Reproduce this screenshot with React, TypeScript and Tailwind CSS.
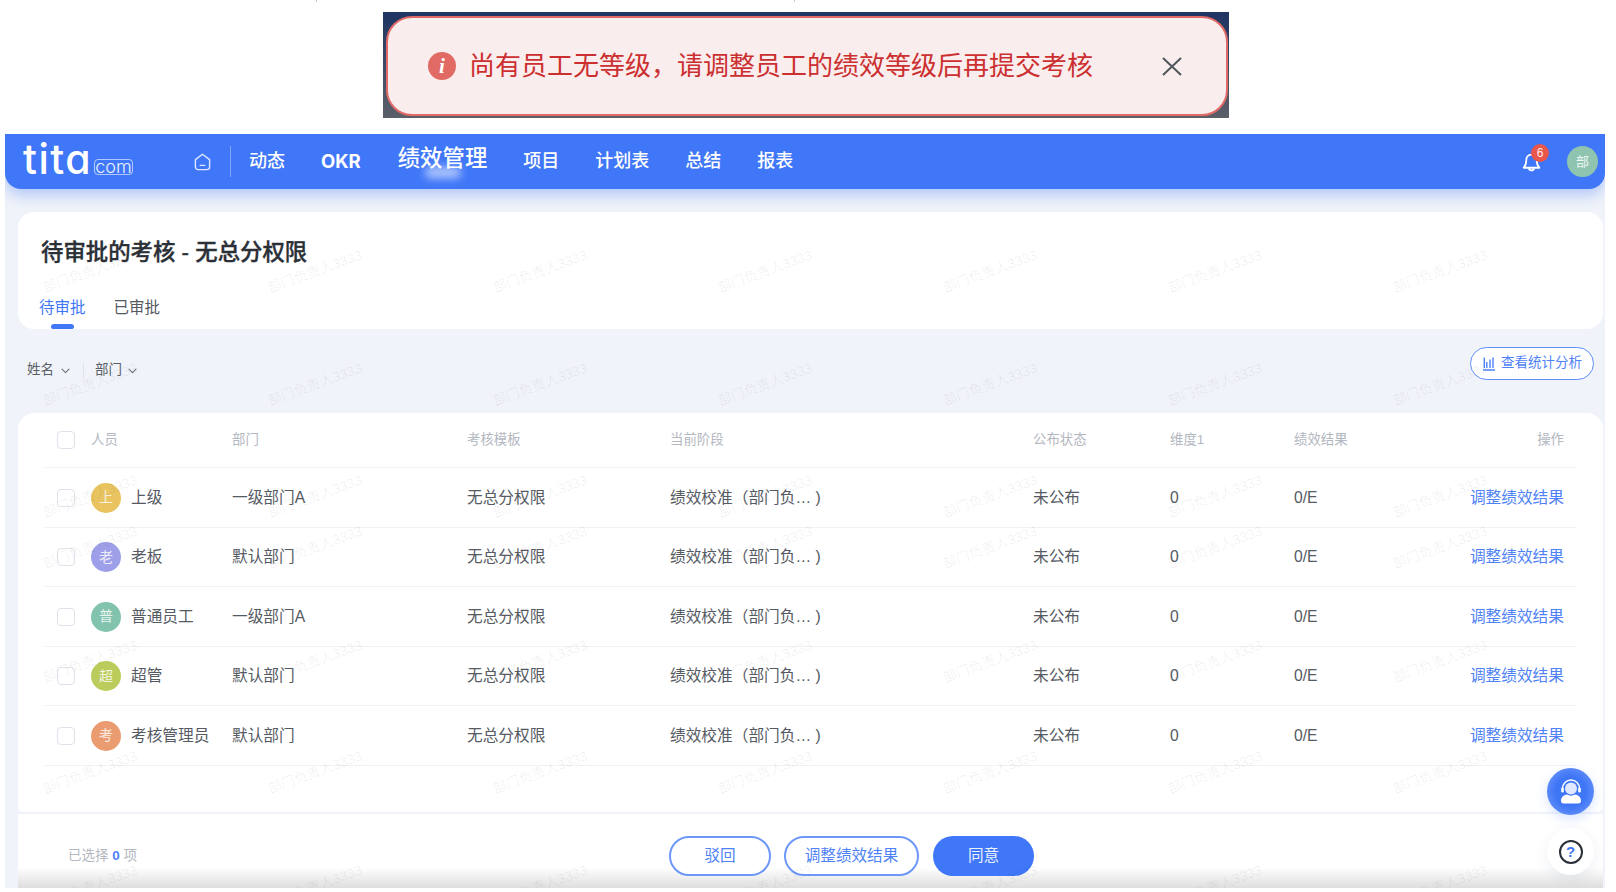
import React from "react";

const rows = [
  { c: "上", color: "bg-[#e8c35f]", name: "上级", dept: "一级部门A" },
  { c: "老", color: "bg-[#9d9fe8]", name: "老板", dept: "默认部门" },
  { c: "普", color: "bg-[#82c3ae]", name: "普通员工", dept: "一级部门A" },
  { c: "超", color: "bg-[#bccc5c]", name: "超管", dept: "默认部门" },
  { c: "考", color: "bg-[#ea9c70]", name: "考核管理员", dept: "默认部门" },
];

const wmY = [252, 365, 477, 528, 642, 753, 867];
const wmX = [43, 268, 493, 718, 943, 1168, 1393];

const cols = "grid grid-cols-[46px_141px_235px_203px_363px_137px_124px_126px_1fr] items-center";

function Chevron() {
  return (
    <svg width="9" height="6" viewBox="0 0 9 6" fill="none" className="text-[#6b7078]">
      <path d="M1 1.2 4.5 4.6 8 1.2" stroke="currentColor" strokeWidth="1.1" strokeLinecap="round" strokeLinejoin="round" />
    </svg>
  );
}

function Check() {
  return <span className="block w-[18px] h-[18px] rounded-[4px] border border-[#dfe2ea] bg-white/60" />;
}

export default function App() {
  return (
    <div className="relative w-[1616px] h-[892px] overflow-hidden bg-white font-['Liberation_Sans','Noto_Sans_CJK_SC',sans-serif]">
      <span className="absolute left-[316px] top-0 w-px h-[2px] bg-[#c8c8c8]" />
      <span className="absolute left-[794px] top-0 w-px h-[2px] bg-[#c8c8c8]" />

      {/* toast */}
      <div className="h-[134px] pt-[12px] pl-[383px]">
        <div className="w-[846px] h-[106px] pl-[3px] pr-px pt-[4px] pb-[2px] bg-linear-to-b from-[#1e3462] to-[#5c5f68]">
          <div className="h-full flex items-center rounded-[26px] border-2 border-[#e06a66] bg-[#f9eded]">
            <span className="ml-[40px] w-[28px] h-[28px] rounded-full bg-[#e16a64] flex items-center justify-center text-white text-[21px] italic font-bold font-['Liberation_Serif',serif] leading-none">
              i
            </span>
            <span className="ml-[13px] text-[26px] leading-none text-[#cc2f30] whitespace-nowrap">
              尚有员工无等级，请调整员工的绩效等级后再提交考核
            </span>
            <svg width="20" height="19" viewBox="0 0 20 19" className="ml-[69px]" fill="none">
              <path d="M1 1 19 18M19 1 1 18" stroke="#50555c" strokeWidth="2" />
            </svg>
          </div>
        </div>
      </div>

      {/* page */}
      <div className="relative ml-[5px] w-[1600px] h-[754px] overflow-hidden bg-[#f0f3f9]">
        {/* nav */}
        <header className="relative h-[55px] flex items-center bg-[#4077f8] rounded-b-[16px] text-white shadow-[0_5px_16px_rgba(64,119,248,0.4)]">
          <div className="ml-[18px] w-[109px] flex items-end h-[30px] mt-[-5px]">
            <span className="text-[41px] leading-[30px] font-medium tracking-[1.5px] font-['Inter',sans-serif] [font-feature-settings:'cv11'] whitespace-nowrap">
              tita
            </span>
            <span className="ml-[2px] mb-[-1px] w-[41px] h-[16px] flex items-center justify-center rounded-[4px] border border-white/60 text-[18px] leading-none text-white/90 font-['Inter',sans-serif] font-light">
              com
            </span>
          </div>
          <svg width="17" height="18" viewBox="0 0 17 18" fill="none" className="ml-[62px]">
            <path d="M8.5 1.2 15.6 6.6V14a2.6 2.6 0 0 1-2.6 2.6H4A2.6 2.6 0 0 1 1.4 14V6.6L8.5 1.2Z" stroke="#dfe8fe" strokeWidth="1.4" strokeLinejoin="round" />
            <path d="M6.2 12.4h4.6" stroke="#dfe8fe" strokeWidth="1.4" strokeLinecap="round" />
          </svg>
          <span className="ml-[19px] w-px h-[31px] bg-white/35" />
          <nav className="ml-[18px] -mt-[1px] flex items-center gap-[36px] text-[18px] font-medium leading-none whitespace-nowrap">
            <span>动态</span>
            <span className="font-['Inter',sans-serif] font-bold text-[18.5px]">OKR</span>
            <span className="relative ml-[1px] text-[22.4px] -mt-[3px]">
              绩效管理
              <span className="absolute left-[27px] top-[19px] w-[36px] h-[11px] rounded-full bg-white/60 blur-[4px]" />
            </span>
            <span>项目</span>
            <span>计划表</span>
            <span>总结</span>
            <span>报表</span>
          </nav>
          <div className="ml-auto mr-[7px] flex items-center">
            <div className="relative w-[19px] h-[19px] mt-[2px]">
              <svg width="19" height="20" viewBox="0 0 18 19" fill="none">
                <path d="M9 1.5C5.6 1.5 4 4.2 4 7.2c0 3.2-.6 5-2.400 6.800h14.800C14.600 12.200 14 10.400 14 7.200c0-3-1.600-5.700-5-5.700Z" stroke="#fff" strokeWidth="1.7" strokeLinejoin="round" />
                <path d="M6.600 14.600c0 2.600 4.800 2.600 4.800 0" stroke="#fff" strokeWidth="1.7" />
              </svg>
              <span className="absolute left-[9px] top-[-9px] w-[18px] h-[18px] rounded-full bg-[#e9574c] flex items-center justify-center text-[12px] leading-none text-white/90">
                6
              </span>
            </div>
            <span className="ml-[26px] w-[31px] h-[31px] rounded-full bg-[#8ec4b0] flex items-center justify-center text-[13px] text-white/85">
              部
            </span>
          </div>
        </header>

        {/* title card */}
        <section className="ml-[13px] mr-[2px] mt-[23px] h-[117px] rounded-[16px] bg-white relative">
          <h1 className="pl-[23px] pt-[27px] text-[22.4px] leading-[28px] font-medium [-webkit-text-stroke:0.35px_#2b2f36] text-[#2b2f36] whitespace-nowrap">
            待审批的考核 - 无总分权限
          </h1>
          <div className="pl-[21px] mt-[29px] flex gap-[28px] text-[15.5px] leading-[24px]">
            <span className="relative text-[#3f77f6]">
              待审批
              <span className="absolute left-[12px] top-[28px] w-[23px] h-[5px] rounded-t-[3px] rounded-b-[2px] bg-[#3f77f6]" />
            </span>
            <span className="text-[#555a62]">已审批</span>
          </div>
        </section>

        {/* filters */}
        <div className="ml-[22px] mr-[11px] h-[84px] flex items-center text-[13.5px] text-[#5a5f67]">
          <span className="-mt-[1px]">姓名</span>
          <span className="ml-[7px]"><Chevron /></span>
          <span className="ml-[13px] w-px h-[16px] bg-[#dfe2e9]" />
          <span className="ml-[11px] -mt-[1px]">部门</span>
          <span className="ml-[6px]"><Chevron /></span>
          <button className="ml-auto -mt-[15px] w-[124px] h-[33px] rounded-full border border-[#5e8ef8] bg-white flex items-center justify-center gap-[5px] text-[13.5px] text-[#4f82f6]">
            <svg width="14" height="15" viewBox="0 0 14 15" fill="none">
              <path d="M1 14h12M2.300 12V1.500M4.800 12V6M8 12V3.500M11 12V1.500" stroke="#4f82f6" strokeWidth="1.400" />
            </svg>
            查看统计分析
          </button>
        </div>

        {/* table */}
        <section className="ml-[13px] mr-[2px] h-[399px] rounded-t-[16px] rounded-b-[5px] bg-white px-[27px]">
          <div className={`${cols} h-[55px] border-b border-[#eff1f5] text-[13.4px] text-[#b3b7bf]`}>
            <span className="pl-[12px]"><Check /></span>
            <span>人员</span>
            <span>部门</span>
            <span>考核模板</span>
            <span>当前阶段</span>
            <span>公布状态</span>
            <span>维度1</span>
            <span>绩效结果</span>
            <span className="text-right pr-[12px]">操作</span>
          </div>
          {rows.map((r) => (
            <div key={r.name} className={`${cols} h-[59.5px] pt-[1px] border-b border-[#eff1f5] text-[15.7px] text-[#555a63]`}>
              <span className="pl-[12px]"><Check /></span>
              <span className="flex items-center gap-[10px]">
                <span className={`w-[30px] h-[30px] rounded-full ${r.color} flex items-center justify-center text-[14px] text-white/80`}>{r.c}</span>
                <span className="whitespace-nowrap">{r.name}</span>
              </span>
              <span className="whitespace-nowrap">{r.dept}</span>
              <span className="whitespace-nowrap">无总分权限</span>
              <span className="whitespace-nowrap">绩效校准（部门负… )</span>
              <span>未公布</span>
              <span>0</span>
              <span>0/E</span>
              <span className="text-right pr-[12px] whitespace-nowrap text-[#4f82f6]">调整绩效结果</span>
            </div>
          ))}
        </section>

        {/* footer */}
        <footer className="ml-[13px] mr-[2px] mt-[2px] h-[74px] pt-[22px] pl-[50px] flex items-start bg-linear-to-b from-white from-[72%] to-[#dedede]">
          <span className="w-[601px] h-[40px] flex items-center text-[13.5px] text-[#b3b7bf] whitespace-pre">
            已选择 <span className="text-[#4f82f6] font-bold">0</span> 项
          </span>
          <button className="w-[102px] h-[40px] rounded-full border-2 border-[#6d98f8] bg-white text-[15.6px] text-[#4f82f6]">驳回</button>
          <button className="ml-[13px] w-[135px] h-[40px] rounded-full border-2 border-[#6d98f8] bg-white text-[15.6px] text-[#4f82f6]">调整绩效结果</button>
          <button className="ml-[14px] w-[101px] h-[40px] rounded-full bg-[#4077f8] text-[15.6px] text-white/90">同意</button>
        </footer>

        {/* floating */}
        <button className="absolute left-[1542px] top-[634px] w-[47px] h-[47px] rounded-full bg-[radial-gradient(circle,#3f76f6_45%,#79a0fa_100%)] shadow-[0_4px_12px_rgba(64,119,248,0.2)] flex items-center justify-center">
          <svg width="26" height="26" viewBox="0 0 26 26" fill="none">
            <circle cx="13" cy="9.500" r="6" fill="#dfe8fe" />
            <path d="M4.500 11V9.500a8.500 8.500 0 0 1 17 0V11" stroke="#fff" strokeWidth="1.500" />
            <rect x="3.200" y="8.500" width="2.600" height="5" rx="1.300" fill="#fff" />
            <rect x="20.200" y="8.500" width="2.600" height="5" rx="1.300" fill="#fff" />
            <path d="M3 22c0-4 3-6 6-6.400 2.400 1.400 5.600 1.400 8 0 3 .4 6 2.400 6 6.400 0 1.600-1 2.500-2.500 2.500h-15C4 24.500 3 23.600 3 22Z" fill="#fff" />
          </svg>
        </button>
        <button className="absolute left-[1542px] top-[694px] w-[47px] h-[47px] rounded-full bg-white shadow-[0_4px_14px_rgba(40,60,110,0.08)] flex items-center justify-center">
          <span className="w-[24px] h-[24px] rounded-full border-2 border-[#2a2e38] flex items-center justify-center text-[15px] leading-none font-bold text-[#3f77f6]">?</span>
        </button>

        {/* watermark */}
        {wmY.flatMap((y) =>
          wmX.map((x) => (
            <div
              key={`${x}-${y}`}
              className="absolute w-[94px] h-[41px] flex items-center justify-center pointer-events-none"
              style={{ left: x - 5, top: y - 134 }}
            >
              <span className="rotate-[-20deg] whitespace-nowrap text-[13.7px] text-black/[0.065]">部门负责人3333</span>
            </div>
          )),
        )}
      </div>
    </div>
  );
}
